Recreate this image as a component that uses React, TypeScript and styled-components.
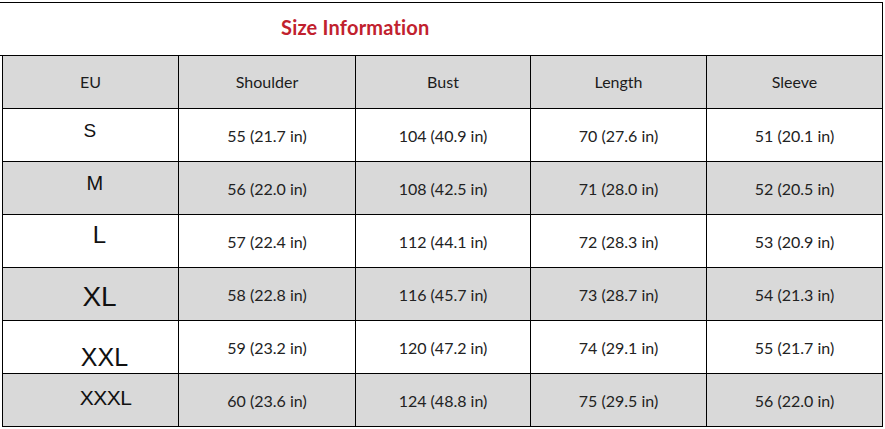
import styled, { createGlobalStyle } from "styled-components";

const GlobalStyle = createGlobalStyle`
    html, body {
        margin: 0;
        padding: 0;
        background: #ffffff;
    }
    body {
        font-family: Lato, "Open Sans", "Liberation Sans", sans-serif;
        color: #1c1c1c;
    }
`;

const Sheet = styled.div`
    width: 883px;
    padding-top: 2px;
`;

const TitleRow = styled.div`
    box-sizing: border-box;
    height: 54px;
    display: flex;
    align-items: center;
    padding-left: 281px;
    padding-bottom: 4px;
    border-top: 1px solid #000;
    border-right: 1px solid #000;
    border-bottom: 1px solid #000;
`;

const Title = styled.h1`
    margin: 0;
    font-family: Lato, "Open Sans", sans-serif;
    font-weight: 700;
    font-size: 20px;
    color: #c1212e;
    letter-spacing: 0.2px;
`;

const Grid = styled.div`
    display: grid;
    grid-template-columns: 176px 177px 175px 176px 176px;
    grid-auto-rows: 53px;
    width: 881px;
    margin-left: 2px;
    border-left: 1px solid #000;
`;

const Cell = styled.div<{ $shade: boolean }>`
    box-sizing: border-box;
    display: flex;
    align-items: center;
    justify-content: center;
    border-right: 1px solid #000;
    border-bottom: 1px solid #000;
    background: ${props => (props.$shade ? "#d9d9d9" : "#ffffff")};
    font-size: 16px;
    padding-top: 1px;
    color: #222;
`;

const HeadCell = styled(Cell)`
    padding-top: 0;
    padding-bottom: 2px;
    color: #1c1c1c;
`;

const SizeCell = styled(Cell)<{ $px: number; $dx: number; $dy: number }>`
    padding: 0;
    span {
        font-family: "Liberation Sans", Arial, sans-serif;
        font-size: ${props => props.$px}px;
        color: #111;
        transform: translate(${props => props.$dx}px, ${props => props.$dy}px);
        letter-spacing: ${props => (props.$px < 22 ? "-0.5px" : "0")};
    }
`;

interface ISizeRow {
    size: string;
    px: number;
    dx: number;
    dy: number;
    values: string[];
}

const headers = ["EU", "Shoulder", "Bust", "Length", "Sleeve"];

const rows: ISizeRow[] = [
    { size: "S", px: 19, dx: -1, dy: -4, values: ["55 (21.7 in)", "104 (40.9 in)", "70 (27.6 in)", "51 (20.1 in)"] },
    { size: "M", px: 20, dx: 4, dy: -5, values: ["56 (22.0 in)", "108 (42.5 in)", "71 (28.0 in)", "52 (20.5 in)"] },
    { size: "L", px: 24, dx: 9, dy: -6, values: ["57 (22.4 in)", "112 (44.1 in)", "72 (28.3 in)", "53 (20.9 in)"] },
    { size: "XL", px: 28, dx: 9, dy: 3, values: ["58 (22.8 in)", "116 (45.7 in)", "73 (28.7 in)", "54 (21.3 in)"] },
    { size: "XXL", px: 25, dx: 14, dy: 10, values: ["59 (23.2 in)", "120 (47.2 in)", "74 (29.1 in)", "55 (21.7 in)"] },
    { size: "XXXL", px: 21, dx: 15, dy: -2, values: ["60 (23.6 in)", "124 (48.8 in)", "75 (29.5 in)", "56 (22.0 in)"] },
];

function App() {
    return (
        <Sheet>
            <GlobalStyle />
            <TitleRow>
                <Title>Size Information</Title>
            </TitleRow>
            <Grid>
                {headers.map(h => (
                    <HeadCell key={h} $shade={true}>{h}</HeadCell>
                ))}
                {rows.map((row, i) => {
                    const shade = i % 2 === 1;
                    return [
                        <SizeCell key={row.size} $shade={shade} $px={row.px} $dx={row.dx} $dy={row.dy}>
                            <span>{row.size}</span>
                        </SizeCell>,
                        ...row.values.map((v, j) => (
                            <Cell key={row.size + j} $shade={shade}>{v}</Cell>
                        )),
                    ];
                })}
            </Grid>
        </Sheet>
    );
}

export default App;
